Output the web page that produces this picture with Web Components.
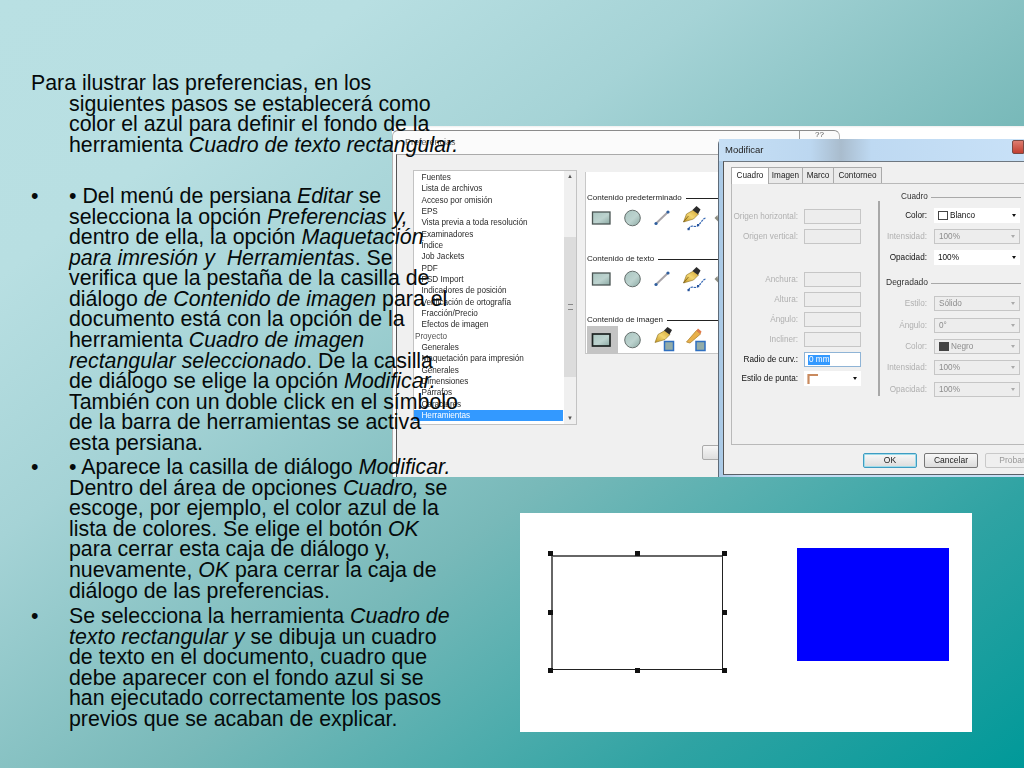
<!DOCTYPE html>
<html lang="es">
<head>
<meta charset="utf-8">
<title>Preferencias</title>
<style>
  html, body { margin: 0; padding: 0; }
  body {
    width: 1024px;
    height: 768px;
    overflow: hidden;
    position: relative;
    font-family: "Liberation Sans", Arial, sans-serif;
    background: linear-gradient(to bottom right, #b9e0e3 0%, #b8dfe2 18%, #a5d3d6 35%, #78b9b9 58%, #2fa3a3 82%, #009999 100%);
  }
</style>
</head>
<body>

<slide-text>
  <slide-para hanging>Para ilustrar las preferencias, en los<br>siguientes pasos se establecerá como<br>color el azul para definir el fondo de la<br>herramienta <em>Cuadro de texto rectangular.</em></slide-para>
  <slide-para bullet style="margin-top:31px">• Del menú de persiana <em>Editar</em> se<br>selecciona la opción <em>Preferencias y,</em><br>dentro de ella, la opción <em>Maquetación</em><br><em>para imresión y&nbsp; Herramientas</em>. Se<br>verifica que la pestaña de la casilla de<br>diálogo <em>de Contenido de imagen</em> para el<br>documento está con la opción de la<br>herramienta <em>Cuadro de imagen</em><br><em>rectangular seleccionado</em>. De la casilla<br>de diálogo se elige la opción <em>Modificar.</em><br>También con un doble click en el símbolo<br>de la barra de herramientas se activa<br>esta persiana.</slide-para>
  <slide-para bullet style="margin-top:4px">• Aparece la casilla de diálogo <em>Modificar.</em><br>Dentro del área de opciones <em>Cuadro,</em> se<br>escoge, por ejemplo, el color azul de la<br>lista de colores. Se elige el botón <em>OK</em><br>para cerrar esta caja de diálogo y,<br>nuevamente, <em>OK</em> para cerrar la caja de<br>diálogo de las preferencias.</slide-para>
  <slide-para bullet style="margin-top:5px">Se selecciona la herramienta <em>Cuadro de</em><br><em>texto rectangular y</em> se dibuja un cuadro<br>de texto en el documento, cuadro que<br>debe aparecer con el fondo azul si se<br>han ejecutado correctamente los pasos<br>previos que se acaban de explicar.</slide-para>
</slide-text>

<shot-frame>
  <prefs-window>
    <pref-item>Fuentes</pref-item>
    <pref-item>Lista de archivos</pref-item>
    <pref-item>Acceso por omisión</pref-item>
    <pref-item>EPS</pref-item>
    <pref-item>Vista previa a toda resolución</pref-item>
    <pref-item>Examinadores</pref-item>
    <pref-item>Índice</pref-item>
    <pref-item>Job Jackets</pref-item>
    <pref-item>PDF</pref-item>
    <pref-item>PSD Import</pref-item>
    <pref-item>Indicadores de posición</pref-item>
    <pref-item>Verificación de ortografía</pref-item>
    <pref-item>Fracción/Precio</pref-item>
    <pref-item>Efectos de imagen</pref-item>
    <pref-item group>Proyecto</pref-item>
    <pref-item>Generales</pref-item>
    <pref-item>Maquetación para impresión</pref-item>
    <pref-item>Generales</pref-item>
    <pref-item>Dimensiones</pref-item>
    <pref-item>Párrafos</pref-item>
    <pref-item>Caracteres</pref-item>
    <pref-item selected>Herramientas</pref-item>
  </prefs-window>
  <modify-dialog></modify-dialog>
</shot-frame>

<result-figure></result-figure>

<script>
class SlideText extends HTMLElement {
  constructor() {
    super();
    this.attachShadow({ mode: "open" });
    this.shadowRoot.innerHTML = `
      <style>
        :host {
          display: block;
          position: relative;
          z-index: 2;
          padding: 73px 0 0 31px;
          font: 21.33px/20.55px "Liberation Sans", Arial, sans-serif;
          color: #050a0a;
        }
      </style>
      <slot></slot>`;
  }
}
customElements.define("slide-text", SlideText);

class SlidePara extends HTMLElement {
  constructor() {
    super();
    this.attachShadow({ mode: "open" });
    const bullet = this.hasAttribute("bullet");
    this.shadowRoot.innerHTML = `
      <style>
        :host { display: flex; white-space: nowrap; }
        .mark { flex: none; width: 38px; }
        .body { margin: 0; }
        :host([hanging]) .body { padding-left: 38px; text-indent: -38px; }
      </style>
      ${bullet ? '<span class="mark">•</span>' : ""}
      <div class="body"><slot></slot></div>`;
  }
}
customElements.define("slide-para", SlidePara);

class ShotFrame extends HTMLElement {
  constructor() {
    super();
    this.attachShadow({ mode: "open" });
    this.shadowRoot.innerHTML = `
      <style>
        :host {
          display: block;
          position: absolute;
          left: 392px;
          top: 126px;
          width: 632px;
          height: 351px;
          overflow: hidden;
          z-index: 1;
          background: linear-gradient(#eeeeee 0, #ffffff 2px, #ffffff 100%);
          filter: blur(0.45px);
          font: 8px/11.33px "Liberation Sans", Arial, sans-serif;
        }
      </style>
      <slot></slot>`;
  }
}
customElements.define("shot-frame", ShotFrame);

class PrefItem extends HTMLElement {
  constructor() {
    super();
    this.attachShadow({ mode: "open" });
    this.shadowRoot.innerHTML = `
      <style>
        :host { display: block; height: 11.33px; padding-left: 7.5px; color: #2a2a2a; white-space: nowrap; font-size: 8.2px; letter-spacing: -0.04px; }
        :host([group]) { padding-left: 1px; color: #555; }
        :host([selected]) { background: #3399ff; color: #fff; }
      </style>
      <slot></slot>`;
  }
}
customElements.define("pref-item", PrefItem);

class ToolIcon extends HTMLElement {
  static shapes = {
    rect: `<rect x="7" y="7" width="17.5" height="12" fill="url(#g)" stroke="#4b5553" stroke-width="1.3"/>`,
    rectOn: `<rect x="7" y="7" width="17.5" height="12" fill="url(#g)" stroke="#1d2322" stroke-width="1.7"/>`,
    oval: `<circle cx="16" cy="13" r="7.8" fill="url(#g)" stroke="#66706e" stroke-width="1"/>`,
    line: `<path d="M9.5 18.5 L21.5 7" stroke="#a8a4a8" stroke-width="2"/><circle cx="9.5" cy="18.5" r="1.6" fill="#2f5f9f"/><circle cx="21.5" cy="7" r="1.6" fill="#2f5f9f"/>`,
    pen: `<path d="M6 17 L9 9 L16 5 L21 9 L16 14 Z" fill="url(#au)" stroke="#8a6e20" stroke-width=".6"/><path d="M15 5 L19 1 L23 4.5 L20.5 9 Z" fill="#2b2b2b"/><path d="M6 17 L11 11" stroke="#5a4410" stroke-width=".6"/><path d="M11 24 C14 18 17 24 21 20 S25 14 28 13" fill="none" stroke="#3668b4" stroke-width="1.2" stroke-dasharray="2.4 .8"/><rect x="10" y="23" width="2.2" height="2.2" fill="#27539b"/><rect x="19.5" y="19" width="2.2" height="2.2" fill="#27539b"/>`,
    penBox: `<path d="M8.5 15.5 L11.5 7.5 L18.5 3.5 L23.5 7.5 L18.5 12.5 Z" fill="url(#au)" stroke="#8a6e20" stroke-width=".6"/><path d="M17.5 3.5 L21 0 L25.5 3 L23 7.5 Z" fill="#2b2b2b"/><rect x="18" y="14.5" width="9" height="9" fill="#93aca8" stroke="#2f6fc0" stroke-width="1.5"/>`,
    pencilBox: `<path d="M9 15 L19 3.5 L23 7 L12.5 16 Z" fill="#e9b04a" stroke="#b0842f" stroke-width=".8"/><path d="M19 3.5 L20.5 1.5 L24 4.5 L23 7 Z" fill="#e07a4a"/><rect x="18.5" y="14.5" width="9" height="9" fill="#93aca8" stroke="#2f6fc0" stroke-width="1.5"/>`,
    stub: `<path d="M7 13 L10 10 L11 17 Z" fill="#8d8d80"/>`
  };
  constructor() {
    super();
    this.attachShadow({ mode: "open" });
    const shape = ToolIcon.shapes[this.getAttribute("shape")] || "";
    this.shadowRoot.innerHTML = `
      <style>
        :host { display: block; width: 30.5px; height: 28px; }
        :host([on]) { background: #c4c4c4; }
        svg { display: block; }
      </style>
      <svg width="31" height="28" viewBox="1.5 -1 31 28">
        <defs>
          <linearGradient id="g" x1="0" y1="0" x2="1" y2="1">
            <stop offset="0" stop-color="#a9c5c0"/><stop offset=".55" stop-color="#bdd3cf"/><stop offset="1" stop-color="#8aa8a2"/>
          </linearGradient>
          <linearGradient id="au" x1="0" y1="1" x2="1" y2="0">
            <stop offset="0" stop-color="#c4951f"/><stop offset=".5" stop-color="#f3d672"/><stop offset="1" stop-color="#cfa22f"/>
          </linearGradient>
        </defs>
        ${shape}
      </svg>`;
  }
}
customElements.define("tool-icon", ToolIcon);

class ToolGroup extends HTMLElement {
  constructor() {
    super();
    this.attachShadow({ mode: "open" });
    this.shadowRoot.innerHTML = `
      <style>
        :host { display: block; }
        .head { display: flex; align-items: center; gap: 4px; height: 12px; padding-left: 1px; color: #222; white-space: nowrap; font-size: 8px; }
        .head::after { content: ""; flex: 1; height: 1px; background: #222; }
        .tools { display: flex; padding-left: 1px; }
      </style>
      <div class="head">${this.getAttribute("title")}</div>
      <div class="tools"><slot></slot></div>`;
  }
}
customElements.define("tool-group", ToolGroup);

class PrefsWindow extends HTMLElement {
  constructor() {
    super();
    this.attachShadow({ mode: "open" });
    this.shadowRoot.innerHTML = `
      <style>
        :host {
          display: flex;
          flex-direction: column;
          width: 448px;
          height: 347px;
          margin-top: 4px;
          box-sizing: border-box;
          border: 1px solid #b5b5b5;
          border-top-color: #8b8b8b;
          border-bottom: 0;
          border-radius: 6px 6px 0 0;
          background: #fbfbfb;
          position: relative;
        }
        .bar { display: flex; align-items: center; justify-content: space-between; height: 23px; padding: 0 0 0 12px; color: #666; font-size: 9px; flex: none; }
        .help { align-self: flex-start; width: 39px; height: 8px; line-height: 8px; border-left: 1px solid #999; text-align: center; color: #555; font-size: 8px; }
        .client {
          flex: 1;
          margin-left: 3px;
          border-left: 1.5px solid #555;
          border-top: 1px solid #aaa;
          background: #f0f0f0;
          display: grid;
          grid-template-columns: 164px 1fr;
          column-gap: 8px;
          padding: 15px 0 0 16px;
          position: relative;
        }
        .list { position: relative; height: 255px; box-sizing: border-box; border: 1px solid #c3c3c3; background: #fff; padding: 1px 13px 0 0; overflow: hidden; }
        .scroll { position: absolute; right: 0; top: 0; bottom: 0; width: 12px; background: #f0f0f0; display: flex; flex-direction: column; align-items: center; color: #555; font-size: 6px; line-height: 10px; }
        .thumb { width: 100%; height: 140px; margin-top: 56px; margin-bottom: 36px; background: #dcdcdc; display: flex; align-items: center; justify-content: center; flex: none; }
        .thumb i { display: block; width: 5px; height: 4px; border-top: 1px solid #888; border-bottom: 1px solid #888; }
        .pane { height: 182px; margin-top: 2px; box-sizing: border-box; background: #fff; border-left: 1px solid #c8c8c8; border-bottom: 1px solid #c8c8c8; padding-top: 20px; display: flex; flex-direction: column; gap: 21px; }
        .apply { position: absolute; left: 305px; top: 290px; width: 30px; height: 15px; box-sizing: border-box; border: 1px solid #aaa; border-radius: 2px; background: linear-gradient(#f6f6f6, #dedede); }
      </style>
      <div class="bar"><span>Preferencias</span><span class="help">??</span></div>
      <div class="client">
        <div class="list">
          <slot></slot>
          <div class="scroll">
            <span>▲</span>
            <div class="thumb"><i></i></div>
            <span>▼</span>
          </div>
        </div>
        <div class="pane">
          <tool-group title="Contenido predeterminado">
            <tool-icon shape="rect"></tool-icon><tool-icon shape="oval"></tool-icon><tool-icon shape="line"></tool-icon><tool-icon shape="pen"></tool-icon><tool-icon shape="stub"></tool-icon>
          </tool-group>
          <tool-group title="Contenido de texto">
            <tool-icon shape="rect"></tool-icon><tool-icon shape="oval"></tool-icon><tool-icon shape="line"></tool-icon><tool-icon shape="pen"></tool-icon><tool-icon shape="stub"></tool-icon>
          </tool-group>
          <tool-group title="Contenido de imagen">
            <tool-icon shape="rectOn" on></tool-icon><tool-icon shape="oval"></tool-icon><tool-icon shape="penBox"></tool-icon><tool-icon shape="pencilBox"></tool-icon>
          </tool-group>
        </div>
        <div class="apply"></div>
      </div>`;
  }
}
customElements.define("prefs-window", PrefsWindow);

class DlgField extends HTMLElement {
  constructor() {
    super();
    this.attachShadow({ mode: "open" });
    const kind = this.getAttribute("kind") || "input";
    const value = this.getAttribute("value") || "";
    const swatch = this.getAttribute("swatch");
    let inner = value ? `<span>${value}</span>` : "";
    if (swatch) inner = `<b class="sw" style="background:${swatch}"></b>` + inner;
    if (kind === "tip") inner = `<svg width="12" height="12" viewBox="0 0 12 12"><path d="M1.5 11 V2 H11" fill="none" stroke="#c98a5e" stroke-width="2.2"/></svg>`;
    if (kind === "edit") inner = `<span class="sel">${value}</span>`;
    const arrow = kind === "select" || kind === "tip" ? '<i class="arrow"></i>' : "";
    this.shadowRoot.innerHTML = `
      <style>
        :host { display: grid; grid-template-columns: var(--label-w, 68px) var(--box-w, 57px); column-gap: var(--gap-w, 5px); align-items: center; height: 15px; font-size: 8.2px; color: #111; white-space: nowrap; }
        :host([disabled]) { color: #b0b0b0; }
        .label { text-align: right; }
        .box { display: flex; align-items: center; gap: 2px; height: 15px; box-sizing: border-box; padding: 0 4px; background: #fff; }
        :host([disabled]) .box { background: #ededed; border: 1px solid #c6c6c6; color: #8c8c8c; }
        :host([kind="edit"]) .box { border: 1px solid #8fb4d6; padding: 0 3px; }
        :host([kind="tip"]) .box { padding-left: 3px; }
        .sw { display: block; width: 10px; height: 9px; border: 1px solid #444; box-sizing: border-box; }
        :host([disabled]) .sw { border-color: #444; }
        .sel { background: #3399ff; color: #fff; padding: 0 1px; line-height: 10px; }
        .arrow { margin-left: auto; width: 0; height: 0; border: 2.5px solid transparent; border-top: 3px solid #111; border-bottom: 0; }
        :host([disabled]) .arrow { border-top-color: #aaa; }
      </style>
      <span class="label">${this.getAttribute("label")}</span>
      <div class="box">${inner}${arrow}</div>`;
  }
}
customElements.define("dlg-field", DlgField);

class DlgHead extends HTMLElement {
  constructor() {
    super();
    this.attachShadow({ mode: "open" });
    this.shadowRoot.innerHTML = `
      <style>
        :host { display: flex; align-items: center; gap: 3px; height: 14px; font-size: 8.2px; color: #333; }
        :host::after { content: ""; flex: 1; height: 1px; background: #a9a9a9; }
      </style>
      <slot></slot>`;
  }
}
customElements.define("dlg-head", DlgHead);

class ModifyDialog extends HTMLElement {
  constructor() {
    super();
    this.attachShadow({ mode: "open" });
    this.shadowRoot.innerHTML = `
      <style>
        :host {
          display: flex;
          flex-direction: column;
          position: absolute;
          left: 326px;
          top: 13px;
          width: 306px;
          height: 338px;
          box-sizing: border-box;
          border-radius: 5px 0 0 0;
          border-left: 1px solid #5f6b78;
          background: linear-gradient(90deg, #a9c9e6, #c6def4 8%, #c6def4);
        }
        .title { position: relative; display: flex; align-items: center; flex: none; height: 22px; padding-left: 6px; font-size: 9.5px; color: #222;
          background: linear-gradient(90deg, #c6dff5 0, #bcd7f0 30%, #a9bccd 40%, #bed9f2 50%, #c8e1f7 100%); }
        .close { position: absolute; right: 0; top: 1px; width: 12px; height: 14px; border-radius: 2px 0 0 2px; background: linear-gradient(#dd7d70, #c23f30); border: 1px solid #7a4a45; box-sizing: border-box; }
        .client { flex: 1; display: flex; flex-direction: column; margin: 0 0 2px 4px; border-left: 1px solid #555; border-top: 1px solid #6e7780; border-bottom: 1px solid #5a6068; background: #f0f0f0; padding: 5px 0 0 7px; }
        .tabs { display: flex; height: 16px; font-size: 8.2px; color: #222; }
        .tab { display: flex; align-items: center; justify-content: center; box-sizing: border-box; border: 1px solid #aaa; border-bottom: 0; margin-right: -1px; background: #eaeaea; }
        .tab.on { background: #fff; height: 17px; z-index: 1; }
        .panel { height: 262px; box-sizing: border-box; border: 1px solid #b9b9b9; border-right: 0; display: grid; grid-template-columns: 146px 1fr; position: relative; flex: none; }
        .left { padding-top: 25px; box-sizing: border-box; --label-w: 66px; --box-w: 57px; --gap-w: 6px; }
        .left dlg-field + dlg-field { margin-top: 5px; }
        .rule { position: absolute; left: 146px; top: 17px; width: 1.5px; height: 195px; background: #a8a8a8; }
        .right { padding: 6px 3px 0 8px; --label-w: 41px; --box-w: 86px; --gap-w: 7px; }
        .right dlg-head { margin-bottom: 4px; }
        .btns { display: flex; gap: 7px; margin: 8px 0 0 132px; }
        .btn { flex: none; width: 54px; height: 15px; line-height: 13px; box-sizing: border-box; text-align: center; font-size: 8.5px; border: 1px solid #777; border-radius: 2px; background: linear-gradient(#f8f8f8, #dcdcdc); color: #222; }
        .btn.def { border-color: #3f9cc2; box-shadow: inset 0 0 0 1px #9fdcea; }
        .btn.off { border-color: #c9c9c9; color: #999; background: #efefef; }
      </style>
      <div class="title">Modificar<span class="close"></span></div>
      <div class="client">
        <div class="tabs">
          <div class="tab on" style="width:38px">Cuadro</div>
          <div class="tab" style="width:35px">Imagen</div>
          <div class="tab" style="width:32px">Marco</div>
          <div class="tab" style="width:49px">Contorneo</div>
        </div>
        <div class="panel">
          <div class="left">
            <dlg-field label="Origen horizontal:" disabled></dlg-field>
            <dlg-field label="Origen vertical:" disabled></dlg-field>
            <dlg-field label="Anchura:" disabled style="margin-top:28px"></dlg-field>
            <dlg-field label="Altura:" disabled></dlg-field>
            <dlg-field label="Ángulo:" disabled></dlg-field>
            <dlg-field label="Incliner:" disabled></dlg-field>
            <dlg-field label="Radio de curv.:" kind="edit" value="0 mm"></dlg-field>
            <dlg-field label="Estilo de punta:" kind="tip" style="margin-top:4px"></dlg-field>
          </div>
          <div class="rule"></div>
          <div class="right">
            <dlg-head style="padding-left:15px">Cuadro</dlg-head>
            <dlg-field label="Color:" kind="select" value="Blanco" swatch="#fff"></dlg-field>
            <dlg-field label="Intensidad:" kind="select" value="100%" disabled style="margin-top:6px"></dlg-field>
            <dlg-field label="Opacidad:" kind="select" value="100%" style="margin-top:6px"></dlg-field>
            <dlg-head style="margin-top:11px;margin-bottom:6px;font-size:8.5px">Degradado</dlg-head>
            <dlg-field label="Estilo:" kind="select" value="Sólido" disabled></dlg-field>
            <dlg-field label="Ángulo:" kind="select" value="0°" disabled style="margin-top:7px"></dlg-field>
            <dlg-field label="Color:" kind="select" value="Negro" swatch="#444" disabled style="margin-top:6px"></dlg-field>
            <dlg-field label="Intensidad:" kind="select" value="100%" disabled style="margin-top:6px"></dlg-field>
            <dlg-field label="Opacidad:" kind="select" value="100%" disabled style="margin-top:7px"></dlg-field>
          </div>
        </div>
        <div class="btns">
          <div class="btn def">OK</div>
          <div class="btn">Cancelar</div>
          <div class="btn off">Probar</div>
        </div>
      </div>`;
  }
}
customElements.define("modify-dialog", ModifyDialog);

class ResultFigure extends HTMLElement {
  constructor() {
    super();
    this.attachShadow({ mode: "open" });
    const spots = [[0,0],[50,0],[100,0],[0,50],[100,50],[0,100],[50,100],[100,100]];
    const handles = spots.map(([x, y]) => `<i style="left:${x}%;top:${y}%"></i>`).join("");
    this.shadowRoot.innerHTML = `
      <style>
        :host {
          display: flex;
          position: absolute;
          left: 520px;
          top: 513px;
          width: 452px;
          height: 219px;
          background: #fff;
          z-index: 1;
          padding: 35px 23px 0 31px;
          box-sizing: border-box;
          justify-content: space-between;
          align-items: flex-start;
        }
        .frame { position: relative; width: 172px; height: 115px; margin-top: 7px; box-sizing: border-box; border: 1px solid #222; border-top: 2px solid #666; border-left: 2px solid #666; }
        .marks { position: absolute; left: -3px; right: -2px; top: -3px; bottom: -2px; }
        .marks i { position: absolute; width: 5px; height: 5px; margin: -3px 0 0 -2.5px; background: #111; }
        .fill { width: 152px; height: 113px; background: #0000ff; }
      </style>
      <div class="frame"><div class="marks">${handles}</div></div>
      <div class="fill"></div>`;
  }
}
customElements.define("result-figure", ResultFigure);
</script>
</body>
</html>
